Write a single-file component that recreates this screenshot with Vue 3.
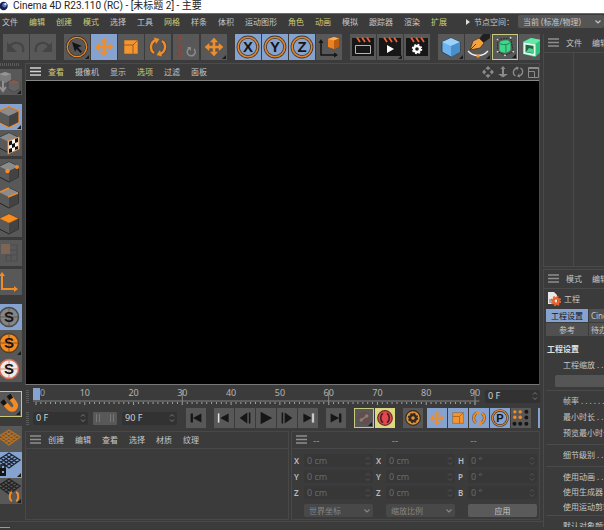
<template>
  <div class="app">
    <svg class="sprite" aria-hidden="true">
      <symbol id="i-undo" viewBox="0 0 26 26"><path d="M7 12c5-6 15-3 13 6" fill="none" stroke="#454545" stroke-width="2.200" /><path d="M4 8v10h10z" fill="#454545" /></symbol>
      <symbol id="i-redo" viewBox="0 0 26 26"><path d="M19 12c-5-6-15-3-13 6" fill="none" stroke="#454545" stroke-width="2.200" /><path d="M22 8v10H12z" fill="#454545" /></symbol>
      <symbol id="i-select" viewBox="0 0 26 26">
        <circle cx="13" cy="13" r="9.7" fill="none" stroke="#3b2c20" stroke-width="2.6" />
        <circle cx="13" cy="13" r="9.7" fill="none" stroke="#e58a31" stroke-width="1.3" />
        <path d="M8 8l10 4-4 1.500 4 4-1.500 1.500-4-4-1.500 3z" fill="#151515" />
      </symbol>
      <symbol id="i-move" viewBox="0 0 26 26">
        <path d="M13 4l3.500 4h-2.500v4h4V9.500l4 3.500-4 3.500V14h-4v4h2.500L13 22l-3.500-4H12v-4H8v2.500L4 13l4-3.500V12h4V8H9.500z" fill="#f08d2b" stroke="#f08d2b" stroke-width=".6" />
      </symbol>
      <symbol id="i-scale" viewBox="0 0 26 26">
        <path d="M6 6h14v14H6z" fill="#f5952f" stroke="#6d563c" stroke-width=".6" />
        <path d="M6 11h9v9M15 11l5-5" fill="none" stroke="#9b5e22" />
      </symbol>
      <symbol id="i-rotate" viewBox="0 0 26 26">
        <path d="M11 6c-6 2-6.500 10-2 13M15 20c6-2 6.500-10 2-13" fill="none" stroke="#57412c" stroke-width="3.600" />
        <path d="M11 6c-6 2-6.500 10-2 13M15 20c6-2 6.500-10 2-13" fill="none" stroke="#f08d2b" stroke-width="2.400" />
        <path d="M9 3.500l5.500 1.500-3.500 5zM17 22.500L11.500 21l3.500-5z" fill="#f08d2b" />
      </symbol>
      <symbol id="i-psr" viewBox="0 0 26 26">
        <path d="M16 14.500a4 4 0 1 0 5 .5" fill="none" stroke="#8a8a8a" stroke-width="1.500" />
        <path d="M14 13h4v4z" fill="#8a8a8a" />
      </symbol>
      <symbol id="i-ring" viewBox="0 0 26 26">
        <circle cx="13" cy="13" r="9.800" fill="none" stroke="#3e3630" stroke-width="3.200" />
        <circle cx="13" cy="13" r="9.800" fill="none" stroke="#dc842f" stroke-width="1.600" />
      </symbol>
      <symbol id="i-coord" viewBox="0 0 26 26">
        <path d="M5 8v13h14" fill="none" stroke="#151515" stroke-width="1.500" />
        <path d="M2.500 9L5 5l2.500 4zM18 18.500l4 2.500-4 2.500z" fill="#151515" />
        <path d="M12 5l6-2 5 1.500v8L18 15l-6-2z" fill="#ec8120" />
        <path d="M12 5l6-2 5 1.500-5 2z" fill="#ffad55" /><path d="M18 6.500l5-2v8L18 15z" fill="#b85c13" />
      </symbol>
      <symbol id="i-clap" viewBox="0 0 26 26">
        <path d="M2 8h22v14H2zM2 4h22v4H2z" fill="#171717" />
        <path d="M7 3.500L10 8M12 3.500L15 8M17 3.500L20 8" stroke="#e96337" stroke-width="1.800" />
      </symbol>
      <symbol id="i-render" viewBox="0 0 26 26"><use href="#i-clap" /><path d="M5.500 11.500h15v8h-15z" fill="none" stroke="#b5b5b5" /></symbol>
      <symbol id="i-renderpv" viewBox="0 0 26 26"><use href="#i-clap" /><path d="M10 11l7 4-7 4z" fill="#fff" /></symbol>
      <symbol id="i-renderset" viewBox="0 0 26 26">
        <use href="#i-clap" />
        <circle cx="13" cy="15" r="3" fill="none" stroke="#fff" stroke-width="2.400" />
        <circle cx="13" cy="15" r="4.500" fill="none" stroke="#fff" stroke-width="1.500" stroke-dasharray="1.800 1.734" />
      </symbol>
      <symbol id="i-cube" viewBox="0 0 26 26">
        <path d="M13 4l9 4v10l-9 5-9-5V8z" fill="#6db2ec" stroke="#223748" stroke-width=".8" />
        <path d="M13 4l9 4-9 4-9-4z" fill="#9bd2fb" /><path d="M13 12l9-4v10l-9 5z" fill="#4b8fca" />
      </symbol>
      <symbol id="i-pen" viewBox="0 0 26 26">
        <path d="M25 0h-7l-4 5 4 4 7-5z" fill="#202020" />
        <path d="M5 16l3-9 6-3 5 5-4 5z" fill="#f3a23f" stroke="#4d351d" stroke-width=".8" />
        <path d="M5 16l6-6" stroke="#5c3d1d" />
        <path d="M3 17c5 6 15 6 20 0" fill="none" stroke="#eee" stroke-width="1.300" />
        <circle cx="13" cy="22" r="1.700" fill="#f3962b" />
      </symbol>
      <symbol id="i-subdiv" viewBox="0 0 26 26">
        <path d="M5 5l14-2 3 15-9 4-8-4z" fill="none" stroke="#1c2b22" stroke-dasharray="2 1" />
        <path d="M7 8c3-3 10-3 12 0v8c-2 4-9 4-12 1z" fill="#3cd98a" />
        <path d="M7 9c3 2 9 2 12-1M14 10v9" fill="none" stroke="#17804d" />
        <g fill="#ddd"><circle cx="5" cy="5" r="1" /><circle cx="19" cy="3" r="1" /><circle cx="22" cy="18" r="1" /><circle cx="5" cy="18" r="1" /><circle cx="13" cy="22" r="1" /></g>
      </symbol>
      <symbol id="i-extrude" viewBox="0 0 26 26">
        <path d="M4 8l8-4 10 2v12l-6 5-12-3z" fill="#2fc47a" />
        <path d="M4 8l8-4 10 2-6 4z" fill="#63eaa8" />
        <path d="M5.500 9.500l10 1.500v10l-10-2z" fill="#23633f" stroke="#dffbee" stroke-width="2" />
        <path d="M7 18l3-4 4 1v4z" fill="#49d58f" />
      </symbol>
      <symbol id="i-nav-pan" viewBox="0 0 12 12"><path d="M6 0l2.500 2.500L6 4 3.500 2.500zM6 12L3.500 9.500 6 8l2.500 1.500zM0 6l2.500-2.500L4 6 2.500 8.500zM12 6L9.500 8.500 8 6l1.500-2.500z" fill="#8b8b8b" /></symbol>
      <symbol id="i-nav-zoom" viewBox="0 0 12 12"><path d="M6 0l2.500 3H7v5h4l-5 3.500L1 8h4V3H3.500z" fill="#8b8b8b" /></symbol>
      <symbol id="i-nav-orbit" viewBox="0 0 12 12"><path d="M5 2C1 3 0 8 3.500 10M7 10c4-1 5-6 1.500-8" fill="none" stroke="#8b8b8b" stroke-width="1.300" /><path d="M4 .5l3 1-2 3zM8 11.500l-3-1 2-3z" fill="#8b8b8b" /></symbol>
      <symbol id="i-nav-full" viewBox="0 0 12 12"><path d="M1.500 1.500h10v10h-10zM1.500 5.500h6v6M1.500 2.500h10" fill="none" stroke="#8b8b8b" /></symbol>
      <symbol id="i-make" viewBox="0 0 26 26">
        <path d="M9 3l6 2v6l-6 3-6-3V5z" fill="#7b7b7b" /><path d="M3 5l6 2 6-2-6-2z" fill="#949494" />
        <path d="M7 12v10M4 18l3 4 3-4" fill="none" stroke="#919191" stroke-width="2" />
        <path d="M18 11l6 2v7l-6 3-6-3v-7z" fill="#626262" stroke="#3e3e3e" stroke-width=".6" /><path d="M12 13l6 2 6-2-6-2z" fill="#87594d" />
      </symbol>
      <symbol id="i-box" viewBox="0 0 26 26">
        <path d="M13 3l9.500 4.500V18L13 23l-9.500-5V7.500z" fill="#595959" stroke="#252525" />
        <path d="M13 3l9.500 4.500L13 12 3.500 7.500z" fill="#8b8b8b" /><path d="M13 12l9.500-4.500V18L13 23z" fill="#434343" />
      </symbol>
      <symbol id="i-model" viewBox="0 0 26 26"><use href="#i-box" /><path d="M13 2.500l10 4.500v11.500L13 23.500l-10-5V7z" fill="none" stroke="#eb8a32" stroke-width="1.300" /></symbol>
      <symbol id="i-texture" viewBox="0 0 26 26">
        <use href="#i-box" />
        <path d="M12 11l11-4v12l-11 5z" fill="#f5f5f5" stroke="#eb8a32" />
        <path d="M13 11.500l3-1v4l-3 1zM19 9l3-1v4l-3 1zM16 14l3-1v4l-3 1zM13 19l3-1v4l-3 1zM19 17l3-1v3l-3 1z" fill="#111" />
      </symbol>
      <symbol id="i-points" viewBox="0 0 26 26"><use href="#i-box" /><circle cx="11.500" cy="12" r="2.300" fill="#f28b26" /><circle cx="21" cy="8" r="2" fill="#f28b26" /></symbol>
      <symbol id="i-edges" viewBox="0 0 26 26"><use href="#i-box" /><path d="M3 7.500L13 3M12 12l10-4" stroke="#f28b26" stroke-width="1.500" /></symbol>
      <symbol id="i-polys" viewBox="0 0 26 26"><use href="#i-box" /><path d="M13 3l9.500 4.500L13 12 3.500 7.500z" fill="#f78d1f" stroke="#8e531c" stroke-width=".5" /></symbol>
      <symbol id="i-uv" viewBox="0 0 26 26">
        <path d="M14 10h7v11H10v-6M14 5h7v5M15 15v6M10 15h11" fill="none" stroke="#4c4c4c" stroke-width="1.200" />
        <path d="M5 4h9v10H5z" fill="#7c6555" />
      </symbol>
      <symbol id="i-axis" viewBox="0 0 26 26">
        <path d="M6 6v14h13" fill="none" stroke="#f28b26" stroke-width="2" /><path d="M3 7l3-4 3 4zM18 17l4 3-4 3z" fill="#f28b26" />
      </symbol>
      <symbol id="i-magnet" viewBox="0 0 26 26">
        <path d="M7 11l6 6.500c4 4 10-1 6-6L14 5" fill="none" stroke="#f28b26" stroke-width="5" />
        <path d="M5.500 9.500l3.500 4M12.500 3.500l3 4" stroke="#141414" stroke-width="5" />
      </symbol>
      <symbol id="i-mesh" viewBox="0 0 26 26">
        <path d="M13 4l11 7-11 8-11-8zM10 6l11 7.500M7.500 8l11 7.500M5 9.500L16 17M16 6L5 13M18.500 8l-11 7M21 9.500L10 17" fill="none" stroke="currentColor" stroke-width="1.300" />
      </symbol>
      <symbol id="i-gridlock" viewBox="0 0 26 26">
        <g color="#1c2530"><use href="#i-mesh" y="-3" /></g>
        <path d="M3 16h7v8H3z" fill="#151515" /><path d="M5 16v-3h4v3" fill="none" stroke="#151515" stroke-width="1.500" /><path d="M6 19h2v2H6z" fill="#88a5d0" />
      </symbol>
      <symbol id="i-gridauto" viewBox="0 0 26 26">
        <g color="#222"><use href="#i-mesh" y="-3" /></g>
        <path d="M16 14c-3 1-3 8 0 9M20 23c3-1 3-8 0-9" fill="none" stroke="#f28b26" stroke-width="2" />
      </symbol>
      <symbol id="i-key" viewBox="0 0 26 26"><circle cx="13" cy="13" r="9" fill="#684b4a" stroke="#555" /><path d="M9 16l8-6" stroke="#80807c" stroke-width="2" /><circle cx="9" cy="16" r="2.500" fill="#80807c" /><circle cx="17" cy="10" r="2.500" fill="#80807c" /></symbol>
      <symbol id="i-autokey" viewBox="0 0 26 26"><circle cx="13" cy="13" r="9.500" fill="#e2484e" stroke="#692b2b" stroke-width="1.500" /><path d="M10.500 7c-4 2-4 10 0 12M15.500 7c4 2 4 10 0 12" fill="none" stroke="#471f24" stroke-width="2" /></symbol>
      <symbol id="i-keysel" viewBox="0 0 26 26">
        <circle cx="13" cy="13" r="9.500" fill="#e2933c" stroke="#352a20" stroke-width="1.500" />
        <circle cx="13" cy="13" r="4" fill="none" stroke="#352a20" stroke-width="3.400" /><circle cx="13" cy="13" r="6" fill="none" stroke="#352a20" stroke-width="1.500" stroke-dasharray="2.400 2.312" />
      </symbol>
      <symbol id="i-dots" viewBox="0 0 26 26">
        <g fill="#f28b26"><circle cx="5" cy="5" r="2.200" /><circle cx="12" cy="5" r="2.200" /><circle cx="5" cy="12" r="2.200" /><circle cx="12" cy="12" r="2.200" /></g>
        <g fill="#171717"><circle cx="20" cy="5" r="2.600" /><circle cx="20" cy="12.500" r="2.600" /><circle cx="20" cy="20.500" r="2.600" /><circle cx="12" cy="20.500" r="2.600" /><circle cx="4.500" cy="20.500" r="2.600" /></g>
      </symbol>
      <symbol id="i-tostart" viewBox="0 0 26 26"><path d="M6 7h3v12H6zM20 7v12L9 13z" fill="#161616" /></symbol>
      <symbol id="i-prevkey" viewBox="0 0 26 26"><path d="M5 7h2v12H5z" fill="#e4e4e4" /><path d="M19 7v12L8 13z" fill="#161616" /></symbol>
      <symbol id="i-prevframe" viewBox="0 0 26 26"><path d="M16 6v14L6 13zM18 6h2v14h-2z" fill="#161616" /></symbol>
      <symbol id="i-play" viewBox="0 0 26 26"><path d="M6 5l15 8-15 8z" fill="#161616" /></symbol>
      <symbol id="i-nextframe" viewBox="0 0 26 26"><path d="M10 6l10 7-10 7zM6 6h2v14H6z" fill="#161616" /></symbol>
      <symbol id="i-nextkey" viewBox="0 0 26 26"><path d="M7 7l11 6-11 6z" fill="#161616" /><path d="M18 7h3v12h-3z" fill="#c9c9c9" /></symbol>
      <symbol id="i-toend" viewBox="0 0 26 26"><path d="M6 7l11 6-11 6zM17 7h3v12h-3z" fill="#161616" /></symbol>
      <symbol id="i-burger" viewBox="0 0 11 9"><path d="M0 1h11M0 4.500h11M0 8h11" stroke="currentColor" stroke-width="1.400" /></symbol>
      <symbol id="i-spin" viewBox="0 0 6 10"><path d="M1 3.500L3 1.500l2 2M1 6.500l2 2 2-2" fill="none" stroke="currentColor" stroke-width="1" /></symbol>
      <symbol id="i-chevron" viewBox="0 0 8 6"><path d="M1.500 1.500L4 4l2.500-2.500" fill="none" stroke="currentColor" stroke-width="1.200" /></symbol>
      <symbol id="i-project" viewBox="0 0 14 16">
        <path d="M1 1h6l3 3v9H1z" fill="#e8e8e8" /><path d="M2 8h6v4H2z" fill="#aaa" />
        <circle cx="9" cy="10" r="2.700" fill="none" stroke="#e96530" stroke-width="2.500" /><circle cx="9" cy="10" r="4.500" fill="none" stroke="#e96530" stroke-width="1.500" stroke-dasharray="1.800 1.734" />
      </symbol>
    </svg>

    <header class="titlebar">
      <svg class="logo" viewBox="0 0 10 10">
        <circle cx="4" cy="5" r="4.600" fill="#15204f" />
        <circle cx="5" cy="4" r="2.600" fill="#5a74c4" />
        <circle cx="6" cy="3" r="1.200" fill="#dfe6fb" />
      </svg>
      <span>Cinema 4D R23.110 (RC) - [未标题 2] - 主要</span>
    </header>

    <nav class="menubar">
      <button v-for="m in mainMenu" :key="m.label" class="menu" :class="{ hot: m.hot }">{{ m.label }}</button>
      <label class="node-space">
        <svg class="caret" viewBox="0 0 4 6"><path d="M0 0l4 3-4 3z" fill="#ddd" /></svg>
        节点空间：
        <span class="select-box">
          <select>
            <option>当前 (标准/物理)</option>
          </select>
          <svg class="chevron"><use href="#i-chevron" /></svg>
        </span>
      </label>
    </nav>

    <div class="body">
      <main class="main">
        <div class="toolbar">
          <div v-for="(group, gi) in toolbar" :key="gi" class="group" :class="{ near: group.near }">
            <button
              v-for="(t, ti) in group.items"
              :key="ti"
              class="tool"
              :class="{ on: t.on, framed: t.framed, more: t.more }"
              :aria-label="t.name"
            >
              <svg><use :href="'#i-' + t.icon" /></svg>
              <b v-if="t.letter" class="letter">{{ t.letter }}</b>
              <b v-if="t.stack" class="stack">
                <span v-for="s in t.stack" :key="s">{{ s }}</span>
              </b>
            </button>
          </div>
        </div>

        <div class="middle">
          <aside class="modes">
            <i class="grip wide"></i>
            <div v-for="(group, gi) in modes" :key="gi" class="mode-group" :class="{ near: group.near }">
              <button
                v-for="(t, ti) in group.items"
                :key="ti"
                class="tool"
                :class="{ on: t.on, framed: t.framed, more: t.more }"
                :aria-label="t.name"
              >
                <svg v-if="t.snap" viewBox="0 0 26 26">
                  <circle cx="13" cy="13" r="9.500" :fill="t.snap" :stroke="t.edge" stroke-width="1.500" />
                  <path d="M4 13h18M13 4v18" :stroke="t.edge" stroke-width=".7" />
                </svg>
                <svg v-else><use :href="'#i-' + t.icon" /></svg>
                <b v-if="t.snap" class="letter">S</b>
              </button>
            </div>
          </aside>

          <div class="workspace">
            <section class="view">
              <div class="view-menu">
                <svg class="burger bright"><use href="#i-burger" /></svg>
                <button v-for="m in viewMenu" :key="m.label" class="menu" :class="{ hot: m.hot }">{{ m.label }}</button>
                <div class="nav-icons">
                  <button v-for="n in ['pan', 'zoom', 'orbit', 'full']" :key="n" :aria-label="n">
                    <svg><use :href="'#i-nav-' + n" /></svg>
                  </button>
                </div>
              </div>
              <div class="viewport"></div>
            </section>

            <div class="timeline">
              <i class="grip"></i>
              <div class="ruler">
                <svg class="scale">
                  <rect class="head" x="-3" y="1" width="7" height="12" />
                  <line class="base" x1="-3" x2="101%" y1="14" y2="14" />
                  <line
                    v-for="f in 91"
                    :key="f"
                    class="tick"
                    :x1="pos(f - 1)"
                    :x2="pos(f - 1)"
                    y1="15"
                    :y2="(f - 1) % 10 === 0 ? 18 : 17"
                  />
                  <line v-for="f in [30, 60, 90]" :key="'l' + f" class="long" :x1="pos(f)" :x2="pos(f)" y1="3" y2="18" />
                  <text x="4" y="9" class="current">0</text>
                  <text v-for="n in 9" :key="'t' + n" :x="pos(n * 10)" y="9" text-anchor="middle">{{ n * 10 }}</text>
                </svg>
              </div>
              <div class="field frame">
                <input v-model="frame" aria-label="当前帧" />
                <svg class="spin"><use href="#i-spin" /></svg>
              </div>
            </div>

            <div class="transport">
              <i class="grip"></i>
              <div class="field frame">
                <input v-model="startFrame" aria-label="起始帧" />
                <svg class="spin"><use href="#i-spin" /></svg>
              </div>
              <div class="range"><i></i><i></i></div>
              <div class="field frame">
                <input v-model="endFrame" aria-label="结束帧" />
                <svg class="spin"><use href="#i-spin" /></svg>
              </div>
              <div v-for="(group, gi) in transport" :key="gi" class="group" :class="{ near: group.near }">
                <button
                  v-for="(t, ti) in group.items"
                  :key="ti"
                  class="tool small"
                  :class="{ on: t.on, framed: t.framed, yellow: t.yellow, more: t.more }"
                  :aria-label="t.icon"
                >
                  <svg><use :href="'#i-' + t.icon" /></svg>
                  <b v-if="t.letter" class="letter">{{ t.letter }}</b>
                </button>
              </div>
              <i class="edge"></i>
            </div>

            <div class="bottom">
              <section class="panel materials">
                <div class="panel-head">
                  <svg class="burger"><use href="#i-burger" /></svg>
                  <button v-for="m in materialMenu" :key="m" class="menu">{{ m }}</button>
                </div>
              </section>
              <section class="panel coords">
                <div class="panel-head">
                  <svg class="burger"><use href="#i-burger" /></svg>
                  <span v-for="n in 3" :key="n" class="dash">--</span>
                </div>
                <div class="coord-grid">
                  <label v-for="(c, i) in coords" :key="i" class="coord">
                    <span>{{ c.axis }}</span>
                    <span class="field">
                      <input v-model="c.value" disabled />
                      <svg class="spin"><use href="#i-spin" /></svg>
                    </span>
                  </label>
                  <div v-for="s in ['世界坐标', '缩放比例']" :key="s" class="cell">
                    <span class="select-box dim">
                      <select :aria-label="s" disabled>
                        <option>{{ s }}</option>
                      </select>
                      <svg class="chevron"><use href="#i-chevron" /></svg>
                    </span>
                  </div>
                  <div class="cell"><button class="apply">应用</button></div>
                </div>
              </section>
            </div>
          </div>
        </div>

        <footer class="status"></footer>
      </main>

      <aside class="side">
        <section class="objects">
          <div class="side-head">
            <svg class="burger"><use href="#i-burger" /></svg>
            <button class="menu">文件</button>
            <button class="menu">编辑</button>
          </div>
          <div class="tree"><div class="names"></div></div>
        </section>
        <section class="attributes">
          <div class="side-head">
            <svg class="burger"><use href="#i-burger" /></svg>
            <button class="menu">模式</button>
            <button class="menu">编辑</button>
          </div>
          <div class="project">
            <svg><use href="#i-project" /></svg>
            <span>工程</span>
          </div>
          <div class="tabs">
            <button class="active">工程设置</button>
            <button>Cineware</button>
            <button>参考</button>
            <button>待办事项</button>
          </div>
          <h2>工程设置</h2>
          <div class="rows">
            <p>工程缩放 . . . .</p>
            <button class="wide-btn" aria-label="缩放工程"></button>
          </div>
          <div class="rows">
            <p>帧率 . . . . . .</p>
            <p>最小时长 . . . .</p>
            <p>预览最小时长</p>
          </div>
          <div class="rows">
            <p>细节级别 . . . .</p>
          </div>
          <div class="rows tight">
            <p>使用动画 . . . .</p>
            <p>使用生成器</p>
            <p>使用运动剪辑</p>
          </div>
          <div class="rows tight">
            <p>默认对象颜色</p>
          </div>
        </section>
      </aside>
    </div>
  </div>
</template>

<script setup>
import { ref } from 'vue'

const menu = (label, hot = false) => ({ label, hot })

const mainMenu = [
  menu('文件'),
  menu('编辑', true),
  menu('创建', true),
  menu('模式', true),
  menu('选择'),
  menu('工具'),
  menu('网格', true),
  menu('样条'),
  menu('体积'),
  menu('运动图形'),
  menu('角色', true),
  menu('动画', true),
  menu('模拟'),
  menu('跟踪器'),
  menu('渲染'),
  menu('扩展', true)
]

const viewMenu = [
  menu('查看', true),
  menu('摄像机'),
  menu('显示'),
  menu('选项', true),
  menu('过滤'),
  menu('面板')
]

const materialMenu = ['创建', '编辑', '查看', '选择', '材质', '纹理']

const toolbar = [
  { items: [{ icon: 'undo', name: '撤销' }, { icon: 'redo', name: '重做' }] },
  {
    items: [
      { icon: 'select', name: '选择', more: true },
      { icon: 'move', name: '移动', on: true },
      { icon: 'scale', name: '缩放' },
      { icon: 'rotate', name: '旋转' }
    ]
  },
  { near: true, items: [{ icon: 'psr', name: '复位 PSR', stack: ['P', 'S', 'R'] }] },
  { near: true, items: [{ icon: 'move', name: '最近工具', more: true }] },
  {
    items: [
      { icon: 'ring', name: 'X 轴', letter: 'X', on: true },
      { icon: 'ring', name: 'Y 轴', letter: 'Y', on: true },
      { icon: 'ring', name: 'Z 轴', letter: 'Z', on: true },
      { icon: 'coord', name: '坐标系统' }
    ]
  },
  {
    items: [
      { icon: 'render', name: '渲染活动视图' },
      { icon: 'renderpv', name: '渲染到图片查看器', more: true },
      { icon: 'renderset', name: '编辑渲染设置' }
    ]
  },
  {
    items: [
      { icon: 'cube', name: '立方体', more: true },
      { icon: 'pen', name: '样条画笔', more: true },
      { icon: 'subdiv', name: '细分曲面', framed: true, more: true },
      { icon: 'extrude', name: '挤压' }
    ]
  }
]

const modes = [
  { near: true, items: [{ icon: 'make', name: '转为可编辑对象', more: true }] },
  { items: [{ icon: 'model', name: '模型', on: true, more: true }, { icon: 'texture', name: '纹理' }] },
  {
    near: true,
    items: [{ icon: 'points', name: '点' }, { icon: 'edges', name: '边' }, { icon: 'polys', name: '多边形' }]
  },
  { near: true, items: [{ icon: 'uv', name: 'UV' }] },
  { near: true, items: [{ icon: 'axis', name: '启用轴心' }] },
  {
    items: [
      { name: '视窗独显关闭', snap: '#858585', edge: '#4a4a4a', on: true },
      { name: '视窗单体独显', snap: '#f58b20', edge: '#574028', more: true },
      { name: '视窗层级独显', snap: '#ececec', edge: '#d66c50' }
    ]
  },
  { items: [{ icon: 'magnet', name: '启用捕捉', framed: true, more: true }] },
  {
    items: [
      { icon: 'mesh', name: '工作平面' },
      { icon: 'gridlock', name: '锁定工作平面', on: true, more: true },
      { icon: 'gridauto', name: '平直工作平面', more: true }
    ]
  }
]

const transport = [
  { items: [{ icon: 'tostart' }] },
  {
    items: [
      { icon: 'prevkey' },
      { icon: 'prevframe' },
      { icon: 'play' },
      { icon: 'nextframe' },
      { icon: 'nextkey' }
    ]
  },
  { items: [{ icon: 'toend' }] },
  { items: [{ icon: 'key', framed: true, more: true }, { icon: 'autokey', yellow: true }] },
  { items: [{ icon: 'keysel' }] },
  {
    near: true,
    items: [
      { icon: 'move', on: true },
      { icon: 'scale', on: true },
      { icon: 'rotate', on: true },
      { icon: 'ring', on: true, letter: 'P' },
      { icon: 'dots' }
    ]
  }
]

const frame = ref('0 F')
const startFrame = ref('0 F')
const endFrame = ref('90 F')

const coords = ref([
  { axis: 'X', value: '0 cm' },
  { axis: 'X', value: '0 cm' },
  { axis: 'H', value: '0 °' },
  { axis: 'Y', value: '0 cm' },
  { axis: 'Y', value: '0 cm' },
  { axis: 'P', value: '0 °' },
  { axis: 'Z', value: '0 cm' },
  { axis: 'Z', value: '0 cm' },
  { axis: 'B', value: '0 °' }
])

// Frame number to horizontal position on the ruler
const pos = (f) => `${(f / 90) * 100}%`
</script>

<style>
body {
  margin: 0;
  background: #3b3b3b;
}
</style>

<style scoped>
.app {
  display: flex;
  flex-direction: column;
  height: 100vh;
  overflow: hidden;
  background: #3b3b3b;
  color: #c6c6c6;
  font-family: "Noto Sans", "Noto Sans CJK SC", sans-serif;
  font-size: 8px;
  line-height: 12px;
  white-space: nowrap;
}

.app *,
.app *::after {
  box-sizing: border-box;
}

.sprite {
  display: none;
}

svg {
  display: block;
  flex: none;
}

button,
input,
select {
  margin: 0;
  padding: 0;
  border: none;
  background: none;
  color: inherit;
  font: inherit;
}

.titlebar {
  display: flex;
  align-items: center;
  gap: 4px;
  flex: none;
  height: 13px;
  padding-bottom: 2px;
  background: #fff;
  color: #222;
  font-family: Roboto, "Noto Sans CJK SC", sans-serif;
  font-size: 10px;
}

.logo {
  width: 9px;
  height: 10px;
}

.menubar {
  display: flex;
  align-items: center;
  gap: 11px;
  flex: none;
  height: 18px;
  padding: 0 0 2px 2px;
  border-top: 1px solid #6a6a6a;
}

.menu {
  flex: none;
}

.menu.hot {
  color: #cdcd7a;
}

.node-space {
  display: flex;
  align-items: center;
  flex: 1;
  gap: 4px;
  margin-left: 8px;
}

.caret {
  width: 4px;
  height: 6px;
}

.select-box {
  display: flex;
  align-items: center;
  flex: 1;
  height: 13px;
  padding: 0 2px 0 5px;
  border-radius: 2px;
  background: #555;
}

.select-box select {
  flex: 1;
  min-width: 0;
  appearance: none;
}

.select-box.dim {
  background: #484848;
  color: #858585;
}

.select-box select:disabled,
.field input:disabled {
  color: inherit;
  opacity: 1;
}

.chevron {
  width: 8px;
  height: 6px;
}

.body {
  display: flex;
  flex: 1;
  min-height: 0;
}

.main {
  display: flex;
  flex-direction: column;
  flex: 1;
  min-width: 0;
}

.toolbar {
  display: flex;
  flex: none;
  margin-right: 3px;
  padding: 3px 0 3px 3px;
  overflow: hidden;
}

.group {
  display: flex;
  flex: none;
  gap: 1px;
}

.group + .group {
  margin-left: 8px;
}

.toolbar .group.near {
  margin-left: 2px;
}

.tool {
  position: relative;
  flex: none;
  width: 26px;
  height: 26px;
  background: #585858;
}

.tool svg {
  width: 100%;
  height: 100%;
}

.tool.on {
  background: #86a3d0;
}

.tool.framed {
  border: 1px solid #c9c97e;
}

.tool.yellow {
  background: #d9d97f;
}

.tool.more::after {
  content: "";
  position: absolute;
  right: 1px;
  bottom: 1px;
  border-left: 4px solid transparent;
  border-bottom: 4px solid #1c1c1c;
}

.tool.small {
  width: 20px;
  height: 20px;
}

.letter {
  position: absolute;
  inset: 0;
  color: #151515;
  font-family: "Liberation Sans", sans-serif;
  font-size: 15px;
  line-height: 26px;
  text-align: center;
}

.small .letter {
  font-size: 11px;
  line-height: 20px;
}

.stack {
  position: absolute;
  inset: 1px auto auto 4px;
  display: flex;
  flex-direction: column;
  color: #85493d;
  font-family: "Liberation Sans", sans-serif;
  font-size: 8px;
  line-height: 8px;
}

.middle {
  display: flex;
  flex: 1;
  min-height: 0;
}

.modes {
  display: flex;
  flex-direction: column;
  flex: none;
  width: 22px;
  overflow: hidden;
}

.mode-group {
  display: flex;
  flex-direction: column;
  align-items: flex-end;
  flex: none;
  margin-top: 9px;
  color: #b9701f;
}

.mode-group.near {
  margin-top: 3px;
}

.grip {
  flex: none;
  width: 3px;
  height: 13px;
  background: repeating-linear-gradient(#5a5a5a 0 1px, transparent 1px 2px);
}

.grip.wide {
  width: 20px;
  height: 3px;
  background: repeating-linear-gradient(90deg, #5a5a5a 0 1px, transparent 1px 2px);
}

.workspace {
  display: flex;
  flex-direction: column;
  flex: 1;
  min-width: 0;
  margin: 0 3px 0 3px;
}

.view {
  display: flex;
  flex-direction: column;
  flex: 1;
  min-height: 0;
  border: 1px solid #4b4b4b;
  border-bottom-color: #777;
}

.view-menu {
  display: flex;
  align-items: center;
  gap: 11px;
  flex: none;
  height: 16px;
  padding: 0 0 1px 4px;
}

.view-menu .burger,
.panel-head .burger {
  margin-right: -4px;
}

.burger {
  width: 11px;
  height: 9px;
  color: #8f8f8f;
}

.burger.bright {
  color: #d2d2d2;
}

.nav-icons {
  display: flex;
  gap: 3px;
  margin-left: auto;
}

.nav-icons svg {
  width: 12px;
  height: 12px;
}

.viewport {
  flex: 1;
  border-top: 1px solid #888;
  background: #000;
}

.timeline {
  display: flex;
  align-items: center;
  flex: none;
  height: 22px;
  padding-left: 1px;
}

.ruler {
  flex: 1;
  min-width: 0;
  padding: 0 10px 0 7px;
}

.scale {
  width: 100%;
  height: 19px;
  overflow: visible;
}

.scale text {
  fill: #b4b4b4;
  font-size: 9px;
}

.scale .current {
  fill: #86a3d0;
}

.head {
  fill: #86a3d0;
}

.base,
.long {
  stroke: #858585;
}

.tick {
  stroke: #a0a0a0;
}

.field {
  display: flex;
  align-items: center;
  flex: 1;
  min-width: 0;
  height: 13px;
  padding: 0 2px 0 3px;
  border-radius: 2px;
  background: #323232;
}

.field input {
  flex: 1;
  width: 0;
  min-width: 0;
  height: 12px;
  font-size: 9px;
}

.field.frame {
  flex: none;
  width: 55px;
  color: #d0d0d0;
}

.spin {
  width: 6px;
  height: 10px;
  color: #777;
}

.transport {
  display: flex;
  align-items: center;
  flex: none;
  height: 22px;
  padding-left: 1px;
}

.transport .grip {
  margin-right: 4px;
}

.transport .group.near {
  margin-left: 4px;
}

.range {
  display: flex;
  align-items: center;
  justify-content: space-between;
  width: 24px;
  height: 13px;
  margin: 0 5px;
  padding: 0 3px;
  border-radius: 1px;
  background: #585858;
}

.range i {
  width: 4px;
  height: 8px;
  background: repeating-linear-gradient(90deg, #777 0 1px, transparent 1px 3px);
}

.range + .field {
  margin-right: 9px;
}

.edge {
  width: 2px;
  height: 20px;
  margin-left: auto;
  background: #86a3d0;
}

.bottom {
  display: flex;
  gap: 2px;
  flex: none;
  height: 89px;
  margin-top: 2px;
}

.panel {
  flex: 1;
  min-width: 0;
  border: 1px solid #484848;
}

.materials {
  flex: 1 1 17px;
}

.panel-head {
  display: flex;
  align-items: center;
  gap: 11px;
  height: 17px;
  padding: 0 0 1px 4px;
  border-bottom: 1px solid #484848;
}

.coords .panel-head {
  gap: 10px;
}

.dash {
  flex: 1;
  color: #8a8a8a;
  font-size: 10px;
}

.coord-grid {
  display: grid;
  grid-template-columns: repeat(3, 1fr);
  gap: 3px;
  padding: 5px 2px 0;
}

.coord {
  display: flex;
  align-items: center;
  gap: 2px;
  color: #bdbdbd;
  font-weight: 600;
}

.coord > span:first-child {
  width: 8px;
}

.coord .field {
  background: #373737;
  color: #696969;
  font-weight: 400;
}

.coord .spin {
  color: #555;
}

.cell {
  display: flex;
  padding: 2px 0 0 10px;
}

.apply {
  flex: 1;
  height: 13px;
  border-radius: 2px;
  background: #5a5a5a;
}

.status {
  flex: none;
  height: 9px;
  margin-top: 1px;
  border-top: 1px solid #4a4a4a;
}

.status::before {
  content: "";
  display: block;
  width: 10px;
  height: 1px;
  margin-top: 5px;
  background: #999;
}

.side {
  display: flex;
  flex-direction: column;
  flex: none;
  width: 61px;
  margin-bottom: 3px;
  padding-top: 3px;
  overflow: hidden;
}

.side-head {
  display: flex;
  align-items: center;
  gap: 10px;
  flex: none;
  height: 18px;
  padding: 0 0 1px 4px;
}

.side-head .burger {
  margin-right: -3px;
}

.objects,
.attributes {
  border-left: 1px solid #4a4a4a;
}

.objects {
  display: flex;
  flex-direction: column;
  flex: 1;
  min-height: 0;
}

.tree {
  flex: 1;
  border-top: 1px solid #4a4a4a;
  border-bottom: 1px solid #4a4a4a;
}

.names {
  width: 30px;
  height: 100%;
  border-right: 1px solid #4a4a4a;
}

.attributes {
  flex: none;
  height: 258px;
  margin-top: 2px;
  overflow: hidden;
  border-top: 1px solid #4a4a4a;
}

.project {
  display: flex;
  align-items: center;
  gap: 3px;
  height: 21px;
  padding-left: 3px;
  border-top: 1px solid #4a4a4a;
}

.project svg {
  width: 14px;
  height: 16px;
}

.tabs {
  display: grid;
  grid-template-columns: 42px 48px;
  gap: 1px;
  padding-left: 2px;
}

.tabs button {
  height: 13px;
  background: #505050;
}

.tabs button:nth-child(even) {
  padding-left: 2px;
  text-align: left;
}

.tabs .active {
  background: #86a3d0;
  color: #151515;
}

h2 {
  margin: 7px 0 0 3px;
  color: #e0e0e0;
  font-size: 8px;
  font-weight: 700;
  line-height: 12px;
}

.rows {
  margin-left: 2px;
  padding: 2px 0 3px 17px;
  border-bottom: 1px solid #4a4a4a;
}

.rows p {
  margin: 0;
  line-height: 16px;
}

.rows.tight {
  padding-bottom: 1px;
}

.rows.tight p {
  line-height: 15px;
}

.wide-btn {
  display: block;
  width: 100px;
  height: 12px;
  margin: 2px 0 0 -8px;
  border-radius: 2px;
  background: #555;
}
</style>
